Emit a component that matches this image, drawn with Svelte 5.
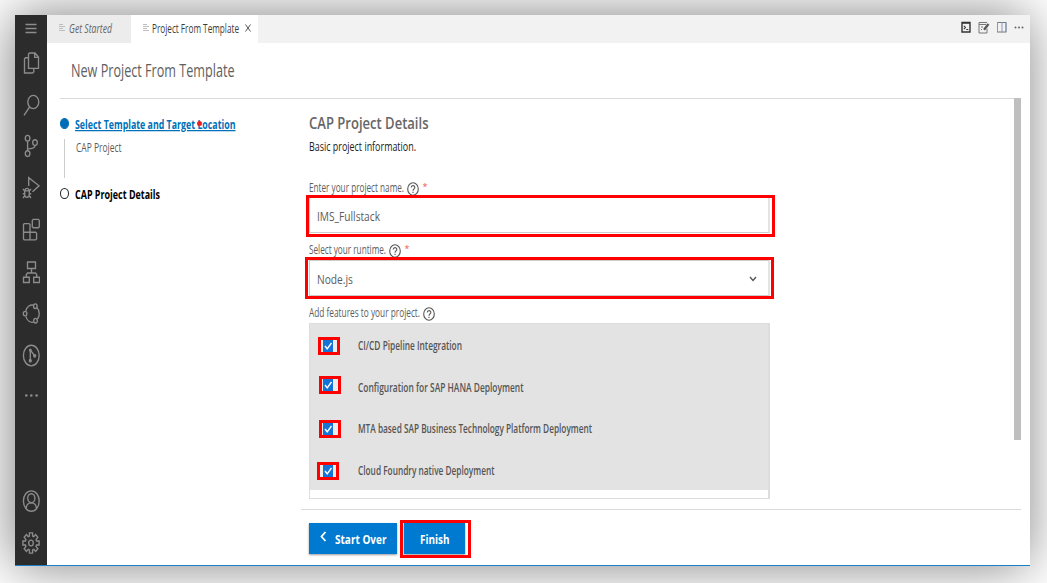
<script>
  const features = [
    { name: 'CI/CD Pipeline Integration', width: 104, height: 45, mark: 'first' },
    { name: 'Configuration for SAP HANA Deployment', width: 165.5, height: 41, mark: 'second' },
    { name: 'MTA based SAP Business Technology Platform Deployment', width: 234, height: 42, mark: 'third' },
    { name: 'Cloud Foundry native Deployment', width: 136.5, height: 38, mark: 'fourth' }
  ];

  // Outline of an eight-toothed cog, slightly taller than wide
  const cog = Array.from({ length: 8 }, (_, i) => {
    const point = (deg, r) => {
      const a = ((i * 45 + deg) * Math.PI) / 180;
      return `${(9 + Math.sin(a) * r * 0.8).toFixed(2)},${(12 - Math.cos(a) * r).toFixed(2)}`;
    };
    return [point(-16, 7.2), point(-11, 10.3), point(11, 10.3), point(16, 7.2)].join(' ');
  }).join(' ');
</script>

{#snippet label(text, width, size, kind)}
  <svg class="label {kind}" {width} height={Math.round(size) + 4} font-size={size}>
    <text y={Math.round(size)} textLength={width} lengthAdjust="spacingAndGlyphs">{text}</text>
  </svg>
{/snippet}

{#snippet help()}
  <svg class="help" width="12" height="14" viewBox="0 0 12 14">
    <ellipse cx="6" cy="7" rx="5.3" ry="6.3" />
    <path d="M4.2 5.6C4.2 3 7.9 3 7.8 5.6C7.8 7 6 6.9 6 8.7M6 9.8v1.3" />
  </svg>
{/snippet}

<div class="window">
  <nav class="rail">
    <div class="menu"><svg width="12" height="12"><path d="M0.5 1.5h11M0.5 5.5h11M0.5 9.5h11" /></svg></div>
    <div class="cell"><svg viewBox="0 0 18 24"><path d="M7.5 2H13l3.5 4v11.3h-10V3zM12.7 2v4.3h3.8M6.5 6.7h-3l-1 1V22h8l1.3-1v-3.7" /></svg></div>
    <div class="cell"><svg viewBox="0 0 18 24"><ellipse cx="11.3" cy="9" rx="5.5" ry="6.6" /><path d="M7.6 14L2 22.3" /></svg></div>
    <div class="cell"><svg viewBox="0 0 18 24"><ellipse cx="5.6" cy="4.2" rx="2.3" ry="2.9" /><ellipse cx="13" cy="8.6" rx="2.3" ry="2.9" /><ellipse cx="5.6" cy="19.6" rx="2.3" ry="2.9" /><path d="M5.6 7v9.7M13 11.5c0 3-3 3.4-7.4 3.4" /></svg></div>
    <div class="cell"><svg viewBox="0 0 18 24"><path d="M6.7 10V1.6l10.4 8.2-6.6 6" /><path d="M2.7 14.8h4.6v4c0 3.3-4.6 3.3-4.6 0zM3.2 14.5c0-2.8 3.6-2.8 3.6 0M1 13l1.7 2M9 13l-1.7 2M.8 17.7h1.9M7.3 17.7h1.9M1 22l1.8-2.2M9 22l-1.8-2.2" /></svg></div>
    <div class="cell"><svg viewBox="0 0 18 24"><path d="M2.3 5.6h4.8l.9 1v7.6h5.6l1 1v5.7l-1 1H2.3l-.8-1V6.6zM1.5 14.2H8V22M11.2 1.4h5.2l.9 1v6.3l-.9 1h-5.2l-.9-1V2.4z" /></svg></div>
    <div class="cell"><svg viewBox="0 0 18 24"><path d="M5.5 2h8v6.5h-8zM1.5 17.2h5.8v5.3H1.5zM11.7 17.2h5.8v5.3h-5.8zM9.5 8.5V13M4.3 17v-2.5l1.2-1.5h8l1.2 1.5V17" /></svg></div>
    <div class="cell"><svg viewBox="0 0 18 24"><ellipse cx="3.1" cy="11.6" rx="1.8" ry="2.3" /><ellipse cx="13.3" cy="4.2" rx="1.8" ry="2.3" /><ellipse cx="13.5" cy="18.7" rx="1.8" ry="2.3" /><path d="M3.8 8.8C5 4.4 8.3 2.3 11.5 3.2M15 5.6c2.8 2.9 3 8.5.4 11.5M11.5 20.2C8 20.9 4.9 18.4 3.9 14.4" /></svg></div>
    <div class="cell"><svg viewBox="0 0 18 24"><ellipse cx="9.3" cy="12.5" rx="7.9" ry="10.3" /><path d="M8.3 6.7v11.2M8.3 7l4.3 5.7" /><g class="solid"><ellipse cx="8.3" cy="7.1" rx="1.4" ry="1.7" /><ellipse cx="12.7" cy="12.8" rx="1.6" ry="1.9" /><ellipse cx="8.3" cy="17.7" rx="1.6" ry="1.9" /></g></svg></div>
    <div class="cell more"><svg viewBox="0 0 18 24"><g class="solid"><circle cx="4.3" cy="12.5" r="1.3" /><circle cx="9.3" cy="12.5" r="1.3" /><circle cx="14.6" cy="12.5" r="1.3" /></g></svg></div>
    <div class="spacer"></div>
    <div class="cell"><svg viewBox="0 0 18 24"><ellipse cx="9.3" cy="12" rx="7.9" ry="10.2" /><ellipse cx="9.3" cy="9.2" rx="3.6" ry="4.5" /><path d="M4.2 19.3c.2-3.7 2-5.4 5.1-5.4s4.9 1.7 5.1 5.4" /></svg></div>
    <div class="cell"><svg viewBox="0 0 18 24"><polygon points={cog} /><ellipse cx="9" cy="12" rx="2.3" ry="2.9" /></svg></div>
  </nav>

  <section class="editor">
    <header class="tabs">
      <div class="tab idle">
        <svg class="doc" width="6" height="9"><path d="M0 1.5h4M0 3.5h6M0 5.5h4M0 7.5h6" /></svg>
        {@render label('Get Started', 43, 12, 'italic')}
      </div>
      <div class="tab open">
        <svg class="doc" width="6" height="9"><path d="M0 1.5h4M0 3.5h6M0 5.5h4M0 7.5h6" /></svg>
        {@render label('Project From Template', 87, 12, 'dark')}
        <svg class="close" width="6" height="8"><path d="M.5.5l5 7M5.5.5l-5 7" /></svg>
      </div>
      <div class="tools">
        <svg width="10" height="12"><path class="ink" d="M1 1.500h8v9.500H1z" /><path class="ink" d="M1 2h8" /><path class="ink thin" d="M2.8 4.8l1.7 1.700-1.700 1.700M5.300 8.500h2" /></svg>
        <svg width="12" height="13"><path class="gray" d="M9 7.5V12H1V1.5h8M1 3.5h7M3 6h2M3 8.5h1" /><path class="pen" d="M10.5 3L6 8.7" /></svg>
        <svg width="10" height="12"><path class="gray" d="M.5 1.5h8.5v9.5H.5z" /><path class="blue" d="M.5 1v10.5M5 1v10.5M9 1v10.5" /></svg>
        <svg width="10" height="12"><g class="dots"><circle cx="1.5" cy="6.5" r="1" /><circle cx="5" cy="6.5" r="1" /><circle cx="8.5" cy="6.5" r="1" /></g></svg>
      </div>
    </header>

    <div class="title">{@render label('New Project From Template', 163.5, 17.3, 'soft')}</div>

    <div class="wizard">
      <aside class="steps">
        <div class="step current">
          <i class="bullet full"></i>
          {@render label('Select Template and Target Location', 160.5, 12.5, 'link')}
          <b class="pointer"></b>
        </div>
        <div class="detail">{@render label('CAP Project', 45.5, 12, 'gray')}</div>
        <div class="step">
          <i class="bullet"></i>
          {@render label('CAP Project Details', 85, 12.5, 'strong')}
        </div>
      </aside>

      <main>
        <div class="form">
          <div class="heading">{@render label('CAP Project Details', 119.5, 16.5, 'head')}</div>
          <div class="intro">{@render label('Basic project information.', 107, 12.5, 'black')}</div>

          <div class="caption one">{@render label('Enter your project name.', 95, 12, 'gray')}{@render help()}<span class="star">*</span></div>
          <div class="field">{@render label('IMS_Fullstack', 63, 13, 'gray')}<b class="frame name"></b></div>

          <div class="caption two">{@render label('Select your runtime.', 77, 12, 'gray')}{@render help()}<span class="star">*</span></div>
          <div class="field">
            {@render label('Node.js', 36, 13, 'gray')}
            <svg class="arrow" width="8" height="6"><path d="M1 1l3 3.5L7 1" /></svg>
            <b class="frame runtime"></b>
          </div>

          <div class="caption three">{@render label('Add features to your project.', 111, 12, 'gray')}{@render help()}</div>
          <div class="list">
            {#each features as feature}
              <div class="feature" style:height="{feature.height}px">
                <div class="box {feature.mark}"><svg width="10" height="12"><path d="M2 6l2.2 2.8L8.5 3" /></svg></div>
                {@render label(feature.name, feature.width, 11.8, 'item')}
              </div>
            {/each}
          </div>
        </div>

        <footer>
          <div class="button back">
            <svg width="7" height="11"><path d="M5.5 1L1.5 5.5l4 4.5" /></svg>
            {@render label('Start Over', 51.5, 12.5, 'white')}
          </div>
          <div class="button finish">{@render label('Finish', 29.5, 12.5, 'white')}<b class="frame end"></b></div>
        </footer>
      </main>
      <div class="scrollbar"></div>
    </div>
  </section>
</div>

<style>
  :global(body) { background: #fff; overflow: hidden; }
  * { box-sizing: border-box; }
  svg { display: block; flex: none; fill: none; }

  .window {
    display: flex; width: 1015px; height: 551px; margin: 15px 0 0 15px;
    font-family: 'Open Sans', 'Noto Sans', sans-serif; background: #fff;
    border-bottom: 1px solid #1b7fc4;
    box-shadow: -2px 0 50px rgba(0, 0, 0, 0.5);
  }
  :global(#app) { display: flow-root; height: 583px; overflow: hidden; }

  .label { overflow: visible; fill: #666; }
  .label.italic { font-style: italic; fill: #666; }
  .label.dark { fill: #3c3c3c; }
  .label.soft { fill: #606060; }
  .label.gray { fill: #5c5c5c; }
  .label.black { fill: #222; }
  .label.link { fill: #0070b8; font-weight: 700; text-decoration: underline; }
  .label.strong { fill: #000; font-weight: 700; }
  .label.head { fill: #666; font-weight: 600; }
  .label.item { fill: #555; font-weight: 600; }
  .label.white { fill: #fff; font-weight: 700; }

  .rail { display: flex; flex-direction: column; width: 32px; padding-bottom: 1px; background: #2c2c2c; }
  .rail svg { stroke: #8c8c8c; stroke-width: 1.35; }
  .rail .solid { fill: #8c8c8c; stroke: none; }
  .menu { display: flex; height: 27px; flex: none; align-items: center; justify-content: center; }
  .cell { display: flex; height: 41.8px; flex: none; align-items: center; padding-left: 7px; }
  .cell svg { width: 18px; height: 24px; }
  .cell.more { height: 38px; }
  .spacer { flex: 1; }

  .editor { display: flex; flex: 1; flex-direction: column; }
  .tabs { display: flex; height: 28px; background: #f2f2f2; }
  .tab { display: flex; padding-top: 6px; }
  .idle { width: 83.5px; padding-left: 12px; background: #ececec; }
  .idle .label { margin-left: 3.5px; }
  .open { width: 127.5px; padding-left: 12px; background: #fff; }
  .open .label { margin-left: 3.5px; }
  .doc { margin-top: 2px; stroke: #bdbdbd; }
  .close { margin: 3px 0 0 5.5px; stroke: #555; }
  .tools { display: flex; margin-left: auto; padding: 6px 6px 0 0; gap: 7px; }
  .ink { stroke: #333; stroke-width: 1.4; }
  .thin { stroke-width: 1.1; }
  .tools .gray { stroke: #777; }
  .pen { stroke: #555; stroke-width: 2.2; }
  .tools .blue { stroke: #8699bb; }
  .dots { fill: #666; }

  .title { height: 56px; margin: 0 9px 0 13px; padding: 17px 0 0 11.4px; border-bottom: 1px solid #d9d9d9; }
  .wizard { display: flex; flex: 1; margin: 0 9px 0 13px; }
  .steps { width: 241px; padding-top: 17px; }
  .step { display: flex; position: relative; height: 22px; gap: 6.4px; }
  .bullet { width: 9px; height: 11px; margin-top: 2px; border: 1px solid #222; border-radius: 50%; }
  .full { background: #006cb5; border-color: #006cb5; }
  .pointer { position: absolute; left: 137px; top: 5px; width: 5px; height: 5px; border-radius: 50%; background: #f02020; }
  .detail { height: 39px; margin: 1px 0 8px 4px; padding: 1px 0 0 10.5px; border-left: 1px solid #ccc; }

  main { display: flex; flex: 1; flex-direction: column; }
  .form { display: flex; flex-direction: column; height: 410px; width: 468.5px; padding-left: 7.5px; }
  .heading { padding-top: 12.5px; height: 38px; }
  .intro { height: 43px; padding-top: 1px; }
  .caption { display: flex; flex: none; gap: 3px; }
  .help { margin-top: 2px; stroke: #555; stroke-width: 1.1; }
  .star { height: 10px; margin-left: 1px; color: #f25050; font-size: 9px; line-height: 13px; }
  .field { display: flex; flex: none; position: relative; height: 36px; align-items: flex-start; padding: 10px 0 0 7px; border: 1px solid #ccc; border-right-width: 2px; border-right-color: #e4e4e4; }
  .frame { position: absolute; border: 3px solid #f00; }
  .name { inset: -3px -7px -5px -4px; }
  .runtime { inset: -4px -6px -4px -5px; }
  .arrow { margin: 5px 11px 0 auto; stroke: #555; stroke-width: 1.4; }
  .one { height: 17px; }
  .two { height: 27px; padding-top: 9px; }
  .three { height: 27px; padding-top: 9px; }
  .list { height: 176px; flex: none; border: 1px solid #ddd; border-right-width: 2px; background: linear-gradient(#e3e3e3 166px, #fff 166px); }
  .feature { display: flex; position: relative; padding-top: 14px; }
  .feature:not(:first-child) { padding-top: 11px; }
  .feature .label { margin-left: 10px; }
  .box { width: 22px; height: 18px; padding: 0 0 0 2px; border: 3px solid #f00; background: #ececec; margin: -1px 8px 0 8px; }
  .box svg { background: #1473d6; stroke: #fff; stroke-width: 1.4; }
  .second, .third { margin-left: 9px; margin-right: 7px; padding-left: 1px; }
  .second { margin-top: -4px; }
  .fourth { margin-left: 7px; margin-right: 9px; padding-left: 3px; }

  footer { display: flex; border-top: 1px solid #d9d9d9; padding: 13px 0 0 7.5px; gap: 7px; }
  .button { display: flex; position: relative; height: 31px; background: #007ad0; box-shadow: 0 1px 2px #999; }
  .back { width: 88.5px; padding: 8px 0 0 11px; gap: 8px; }
  .back > svg:first-child { stroke: #fff; stroke-width: 1.8; }
  .finish { width: 61px; padding: 8px 0 0 16px; }
  .end { inset: -3px -6px -4px -4px; }
  .scrollbar { width: 7px; height: 342px; margin: -1px 0 0 -7px; background: #bfbfbf; }
</style>
